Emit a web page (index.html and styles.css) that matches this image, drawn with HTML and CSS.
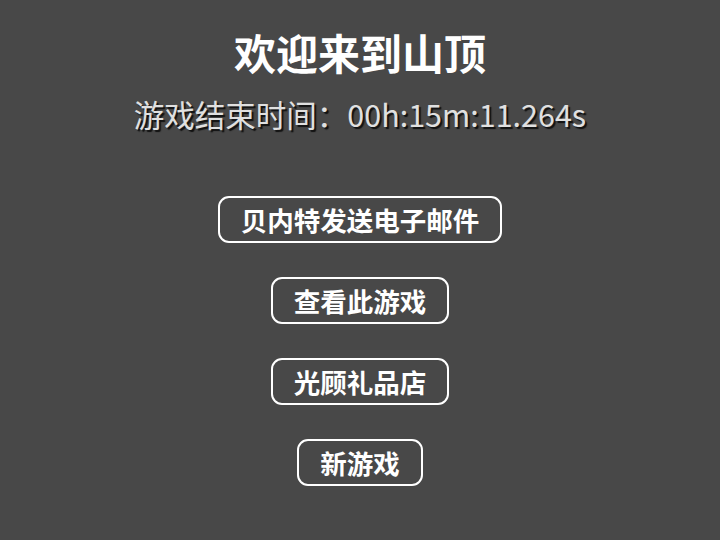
FILE: index.html
```html
<!DOCTYPE html>
<html>
<head>
<meta name="viewport" content="width=device-width, initial-scale=1">
<title>山顶</title>
<link rel="stylesheet" href="styles.css">
</head>
<body>

<div class="endScreen">
  <h1 class="title">欢迎来到山顶</h1>
  <p class="time">游戏结束时间：00h:15m:11.264s</p>

  <div class="menu">
    <span class="menuBtn">贝内特发送电子邮件</span>
    <span class="menuBtn">查看此游戏</span>
    <span class="menuBtn">光顾礼品店</span>
    <span class="menuBtn">新游戏</span>
  </div>
</div>

</body>
</html>
```

FILE: styles.css
```css
* {
  box-sizing: border-box;
}

body {
  margin: 0;
  background: #484848;
  color: #fff;
  font-family: "Noto Sans CJK SC", "Noto Sans", sans-serif;
}

.endScreen {
  display: flex;
  flex-direction: column;
  align-items: center;
  padding-top: 24px;
}

/* heading */
.title {
  margin: 0;
  font-size: 42px;
  line-height: 56px;
  font-weight: 700;
}

.time {
  margin: 14px 0 0;
  font-size: 30.5px;
  line-height: 40px;
  color: #e0e0e0;
  text-shadow: 2px 2px 1px #111;
}

/* buttons */
.menu {
  display: flex;
  flex-direction: column;
  align-items: center;
  gap: 34px;
  margin-top: 62px;
}

.menuBtn {
  border: 2px solid #fff;
  border-radius: 11px;
  padding: 2px 21px;
  font-size: 26.5px;
  line-height: 39px;
  min-height: 47px;
  font-weight: 700;
  cursor: pointer;
}
```
